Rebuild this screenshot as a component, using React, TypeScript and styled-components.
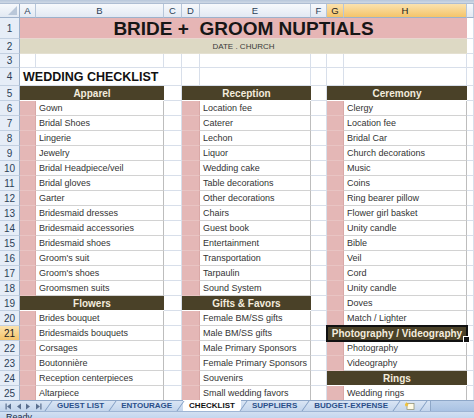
import React from "react";
import styled, { createGlobalStyle, css } from "styled-components";

const Global = createGlobalStyle`
  html, body { margin: 0; padding: 0; background: #ffffff; }
  body { font-family: "Liberation Sans", Arial, sans-serif; }
  * { box-sizing: border-box; }
`;

const Window = styled.div`
  width: 474px;
  height: 418px;
  display: flex;
  flex-direction: column;
  overflow: hidden;
  background: #fff;
`;

const TopStrip = styled.div`
  height: 4px;
  flex: none;
  background: linear-gradient(#b7c6da, #cfd9e6);
  border-bottom: 1px solid #aebdd2;
`;

const SheetArea = styled.div`
  flex: 1;
  overflow: hidden;
  min-height: 0;
`;

const Grid = styled.div`
  display: grid;
  grid-template-columns: 20px 16px 128px 18px 18px 111px 16px 17px 123px 7px;
  grid-template-rows: 14px 21px 15px 14px 18px repeat(21, 15px);
`;

const headBg = css`
  background: linear-gradient(#f7f9fc, #e2e9f3);
  color: #2c3f58;
`;
const headActive = css`
  background: linear-gradient(#fbe2ae, #f4c46a);
  color: #1a1a1a;
`;

const Corner = styled.div`
  ${headBg};
  position: relative;
  border-right: 1px solid #9db1cb;
  border-bottom: 1px solid #9db1cb;
  &::after {
    content: "";
    position: absolute;
    right: 2px;
    bottom: 2px;
    width: 0;
    height: 0;
    border-left: 9px solid transparent;
    border-bottom: 9px solid #b9c7d9;
  }
`;

const ColHead = styled.div<{ $active?: boolean }>`
  ${(p) => (p.$active ? headActive : headBg)};
  display: flex;
  align-items: center;
  justify-content: center;
  font-size: 9.5px;
  border-right: 1px solid #b6c6da;
  border-bottom: 1px solid #9db1cb;
`;

const RowHead = styled.div<{ $active?: boolean }>`
  ${(p) =>
    p.$active
      ? headActive
      : css`
          background: #e6edf7;
          color: #2c3f58;
        `};
  display: flex;
  align-items: center;
  justify-content: center;
  font-size: 10px;
  border-right: 1px solid #9db1cb;
  border-bottom: 1px solid #c3d0e1;
`;

const Blank = styled.div`
  border-right: 1px solid #d8dfea;
  border-bottom: 1px solid #d8dfea;
`;

const TitleCell = styled.div`
  grid-column: span 8;
  background: #e6b5b5;
  display: flex;
  align-items: center;
  justify-content: center;
  font-weight: bold;
  font-size: 19px;
  color: #161616;
  white-space: pre;
  padding-top: 2px;
  border-bottom: 1px solid #e9d6d0;
`;

const SubtitleCell = styled.div`
  grid-column: span 8;
  background: #ddd9c4;
  display: flex;
  align-items: center;
  justify-content: center;
  font-size: 8px;
  color: #3a3a3a;
  border-bottom: 1px solid #e4e0d0;
`;

const SheetTitle = styled.div`
  grid-column: span 3;
  display: flex;
  align-items: center;
  padding-left: 3px;
  padding-top: 1px;
  font-weight: bold;
  font-size: 12.5px;
  color: #111;
  white-space: nowrap;
  border-right: 1px solid #d8dfea;
  border-bottom: 1px solid #d8dfea;
`;

const SectionHead = styled.div<{ $selected?: boolean }>`
  grid-column: span 2;
  position: relative;
  background: #4a4128;
  color: #f3ecdd;
  font-weight: bold;
  font-size: 10px;
  display: flex;
  align-items: center;
  justify-content: center;
  border-bottom: 1px solid #ffffff;
  ${(p) =>
    p.$selected &&
    css`
      outline: 2px solid #111;
      outline-offset: -1px;
      z-index: 2;
      &::after {
        content: "";
        position: absolute;
        right: -3px;
        bottom: -3px;
        width: 5px;
        height: 5px;
        background: #111;
        border: 1px solid #fff;
      }
    `}
`;

const PinkCell = styled.div`
  background: #e4b7b6;
  border-bottom: 1px solid #e8c4c3;
  border-right: 1px solid #d9a8a7;
`;

const ItemCell = styled.div`
  display: flex;
  align-items: center;
  padding-left: 3px;
  font-size: 9px;
  color: #333;
  white-space: nowrap;
  overflow: hidden;
  border-right: 1px solid #bdbdbd;
  border-bottom: 1px solid #d2d2d2;
`;

const TabBar = styled.div`
  height: 11px;
  flex: none;
  display: flex;
  align-items: stretch;
  background: linear-gradient(#d9e5f4, #c3d5ec);
  border-top: 1px solid #8ea7c8;
`;

const NavBox = styled.div`
  width: 46px;
  flex: none;
  display: flex;
  align-items: center;
  justify-content: space-around;
  padding: 0 3px;
`;

const Tab = styled.div<{ $active?: boolean }>`
  display: flex;
  align-items: center;
  padding: 0 6px;
  font-size: 8px;
  font-weight: bold;
  color: ${(p) => (p.$active ? "#111" : "#2a4f8a")};
  background: ${(p) => (p.$active ? "#ffffff" : "transparent")};
  white-space: nowrap;
  line-height: 1;
  margin-top: ${(p) => (p.$active ? "-1px" : "0")};
`;

const Sep = styled.div`
  width: 1px;
  flex: none;
  margin: 0 2px;
  background: #7f9cc2;
  transform: skewX(-35deg);
`;

const NewTab = styled.div`
  display: flex;
  align-items: center;
  padding: 0 6px 0 6px;
`;

const TabFill = styled.div`
  flex: 1;
  margin-left: 4px;
  background: linear-gradient(#bcd0ea, #a9c2e3);
  border-left: 1px solid #8ea7c8;
`;

const StatusBar = styled.div`
  height: 7px;
  flex: none;
  background: linear-gradient(#d3e0f2, #c4d6ee);
  border-top: 1px solid #9fb5d4;
  overflow: hidden;
  font-size: 9px;
  color: #1c2c44;
  padding: 1px 0 0 6px;
  line-height: 1;
`;

type Entry = { h: string; sel?: boolean } | { t: string };

const H = (h: string, sel?: boolean): Entry => ({ h, sel });
const T = (t: string): Entry => ({ t });

const apparel: Entry[] = [
  H("Apparel"),
  T("Gown"),
  T("Bridal Shoes"),
  T("Lingerie"),
  T("Jewelry"),
  T("Bridal Headpiece/veil"),
  T("Bridal gloves"),
  T("Garter"),
  T("Bridesmaid dresses"),
  T("Bridesmaid accessories"),
  T("Bridesmaid shoes"),
  T("Groom's suit"),
  T("Groom's shoes"),
  T("Groomsmen suits"),
  H("Flowers"),
  T("Brides bouquet"),
  T("Bridesmaids bouquets"),
  T("Corsages"),
  T("Boutonnière"),
  T("Reception centerpieces"),
  T("Altarpiece"),
];

const reception: Entry[] = [
  H("Reception"),
  T("Location fee"),
  T("Caterer"),
  T("Lechon"),
  T("Liquor"),
  T("Wedding cake"),
  T("Table decorations"),
  T("Other decorations"),
  T("Chairs"),
  T("Guest book"),
  T("Entertainment"),
  T("Transportation"),
  T("Tarpaulin"),
  T("Sound System"),
  H("Gifts & Favors"),
  T("Female BM/SS gifts"),
  T("Male BM/SS gifts"),
  T("Male Primary Sponsors"),
  T("Female Primary Sponsors"),
  T("Souvenirs"),
  T("Small wedding favors"),
];

const ceremony: Entry[] = [
  H("Ceremony"),
  T("Clergy"),
  T("Location fee"),
  T("Bridal Car"),
  T("Church decorations"),
  T("Music"),
  T("Coins"),
  T("Ring bearer pillow"),
  T("Flower girl basket"),
  T("Unity candle"),
  T("Bible"),
  T("Veil"),
  T("Cord"),
  T("Unity candle"),
  T("Doves"),
  T("Match / Lighter"),
  H("Photography / Videography", true),
  T("Photography"),
  T("Videography"),
  H("Rings"),
  T("Wedding rings"),
];

const Section: React.FC<{ e: Entry }> = ({ e }) =>
  "h" in e ? (
    <SectionHead $selected={e.sel}>{e.h}</SectionHead>
  ) : (
    <>
      <PinkCell />
      <ItemCell>{e.t}</ItemCell>
    </>
  );

const Blanks: React.FC<{ n: number }> = ({ n }) => (
  <>
    {Array.from({ length: n }).map((_, i) => (
      <Blank key={i} />
    ))}
  </>
);

const NavIcon: React.FC<{ dir: "first" | "prev" | "next" | "last" }> = ({ dir }) => {
  const left = dir === "first" || dir === "prev";
  const bar = dir === "first" || dir === "last";
  return (
    <svg width="7" height="7" viewBox="0 0 7 7">
      {left ? (
        <polygon points="6,0.5 6,6.5 2,3.5" fill="#5a6f8f" />
      ) : (
        <polygon points="1,0.5 1,6.5 5,3.5" fill="#5a6f8f" />
      )}
      {bar && (left ? <rect x="0.5" y="0.5" width="1.2" height="6" fill="#5a6f8f" /> : <rect x="5.3" y="0.5" width="1.2" height="6" fill="#5a6f8f" />)}
    </svg>
  );
};

const cols = ["A", "B", "C", "D", "E", "F", "G", "H", ""];

export default function App() {
  return (
    <>
      <Global />
      <Window>
        <TopStrip />
        <SheetArea>
          <Grid>
            <Corner />
            {cols.map((c, i) => (
              <ColHead key={i} $active={c === "G" || c === "H"}>
                {c}
              </ColHead>
            ))}

            <RowHead>1</RowHead>
            <TitleCell>{"BRIDE +  GROOM NUPTIALS"}</TitleCell>
            <Blank />

            <RowHead>2</RowHead>
            <SubtitleCell>DATE . CHURCH</SubtitleCell>
            <Blank />

            <RowHead>3</RowHead>
            <Blanks n={9} />

            <RowHead>4</RowHead>
            <SheetTitle>WEDDING CHECKLIST</SheetTitle>
            <Blanks n={6} />

            {apparel.map((a, i) => (
              <React.Fragment key={i}>
                <RowHead $active={i + 5 === 21}>{i + 5}</RowHead>
                <Section e={a} />
                <Blank />
                <Section e={reception[i]} />
                <Blank />
                <Section e={ceremony[i]} />
                <Blank />
              </React.Fragment>
            ))}
          </Grid>
        </SheetArea>
        <TabBar>
          <NavBox>
            <NavIcon dir="first" />
            <NavIcon dir="prev" />
            <NavIcon dir="next" />
            <NavIcon dir="last" />
          </NavBox>
          <Sep />
          <Tab>GUEST LIST</Tab>
          <Sep />
          <Tab>ENTOURAGE</Tab>
          <Sep />
          <Tab $active>CHECKLIST</Tab>
          <Sep />
          <Tab>SUPPLIERS</Tab>
          <Sep />
          <Tab>BUDGET-EXPENSE</Tab>
          <Sep />
          <NewTab>
            <svg width="10" height="8" viewBox="0 0 10 8">
              <rect x="2" y="1.5" width="7" height="6" fill="#fffbe6" stroke="#8a8a6a" strokeWidth="0.7" />
              <polygon points="1.5,0 2.3,1.6 4,1.8 2.7,2.9 3,4.5 1.5,3.7 0,4.5 0.3,2.9 -1,1.8 0.7,1.6" fill="#f0c23a" />
            </svg>
          </NewTab>
          <Sep />
          <TabFill />
        </TabBar>
        <StatusBar>Ready</StatusBar>
      </Window>
    </>
  );
}
